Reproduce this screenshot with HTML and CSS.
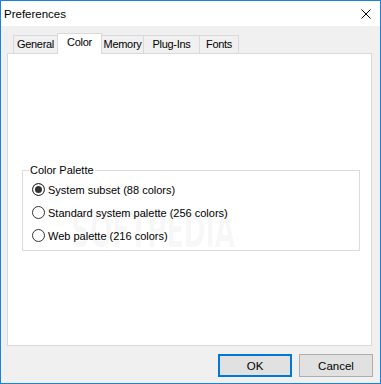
FILE: index.html
```html
<!DOCTYPE html>
<html lang="en">
<head>
  <meta charset="UTF-8" />
  <title>Preferences</title>
  <link rel="stylesheet" href="styles.css">
</head>
<body>

  <div class="window">
    <div class="titlebar">
      <span class="title">Preferences</span>
      <svg class="close" width="10" height="10" viewBox="0 0 10 10">
        <path d="M0.5 0.5 L9.5 9.5 M9.5 0.5 L0.5 9.5" stroke="#000" stroke-width="1" fill="none" />
      </svg>
    </div>

    <div class="body">
      <div class="tabs">
        <div class="tab general">General</div>
        <div class="tab color active">Color</div>
        <div class="tab memory">Memory</div>
        <div class="tab plugins">Plug-Ins</div>
        <div class="tab fonts">Fonts</div>
      </div>

      <div class="panel">
        <fieldset class="group">
          <legend>Color Palette</legend>
          <label class="option"><input type="radio" name="palette" checked> System subset (88 colors)</label>
          <label class="option"><input type="radio" name="palette"> Standard system palette (256 colors)</label>
          <label class="option"><input type="radio" name="palette"> Web palette (216 colors)</label>
        </fieldset>
        <div class="watermark">SOFTPEDIA</div>
      </div>

      <div class="buttons">
        <button class="btn default">OK</button>
        <button class="btn">Cancel</button>
      </div>
    </div>
  </div>

</body>
</html>
```

FILE: styles.css
```css
body {
  margin: 0;
  font-family: "Liberation Sans", Arial, sans-serif;
  font-size: 11px;
  color: #000;
}

.window {
  width: 381px;
  height: 384px;
  box-sizing: border-box;
  border: 1px solid #1883d7;
  background: #f0f0f0;
  display: flex;
  flex-direction: column;
}

.titlebar {
  height: 25px;
  background: #fff;
  display: flex;
  align-items: center;
  justify-content: space-between;
  padding: 0 9px 0 3px;
}

.title {
  font-size: 11.5px;
}

.body {
  flex: 1;
  display: flex;
  flex-direction: column;
  padding: 7px 8px 0 6px;
}

/* tab strip */
.tabs {
  display: flex;
  align-items: flex-start;
  height: 21px;
  margin-bottom: -1px;
  padding-left: 6px;
  position: relative;
}

.tab {
  margin-top: 2px;
  height: 18px;
  line-height: 17px;
  text-align: center;
  letter-spacing: -0.3px;
  border: 1px solid #d9d9d9;
  border-bottom: none;
  box-sizing: border-box;
  background: #f0f0f0;
  margin-left: -1px;
}

.tab.general { width: 45px; margin-left: 0; }
.tab.color { width: 45px; }
.tab.memory { width: 43px; }
.tab.plugins { width: 57px; }
.tab.fonts { width: 40px; }

.tab.active {
  margin-top: 0;
  height: 21px;
  line-height: 16px;
  background: #fff;
  position: relative;
  z-index: 1;
}

.panel {
  height: 293px;
  box-sizing: border-box;
  border: 1px solid #d9d9d9;
  background: #fff;
  position: relative;
}

.group {
  margin: 110px 11px 0 14px;
  padding: 1px 6px 3px 6px;
  border: 1px solid #dcdcdc;
}

.group legend {
  padding: 0 1px;
  line-height: 13px;
}

.option {
  display: flex;
  align-items: center;
  height: 23px;
  margin-left: 3px;
}

.option input {
  appearance: none;
  width: 13px;
  height: 13px;
  margin: 0 3px 0 0;
  border: 1px solid #333;
  border-radius: 50%;
  background: #fff;
}

.option input:checked {
  background: #333;
  box-shadow: inset 0 0 0 2px #fff;
}

.watermark {
  position: absolute;
  left: 63px;
  top: 154px;
  font-family: "DejaVu Sans", sans-serif;
  font-weight: bold;
  font-size: 46px;
  line-height: 1;
  letter-spacing: -1px;
  color: rgba(0, 0, 0, 0.035);
  transform: scaleX(0.58);
  transform-origin: left top;
  pointer-events: none;
}

.buttons {
  display: flex;
  justify-content: flex-end;
  gap: 7px;
  margin: 8px -1px 0 0;
}

.btn {
  width: 74px;
  height: 23px;
  box-sizing: border-box;
  border: 1px solid #adadad;
  background: #e1e1e1;
  font-family: inherit;
  font-size: 11.5px;
  color: #000;
  padding: 0;
}

.btn.default {
  border: 2px solid #0078d7;
}
```
